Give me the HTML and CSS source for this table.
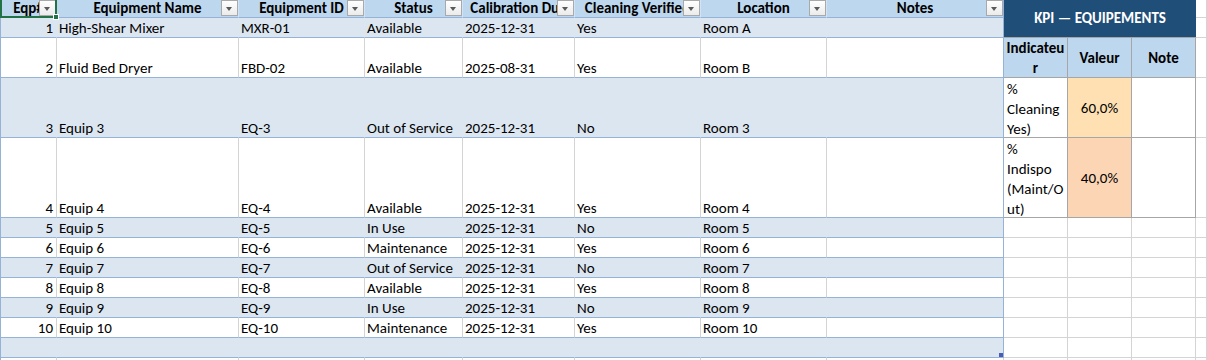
FILE: index.html
```html
<!DOCTYPE html>
<html>
<head>
<meta charset="utf-8">
<title>Equipment</title>
<link rel="stylesheet" href="styles.css">
</head>
<body>
<div class="sheet">
  <div class="tbl">
    <div class="row hdr">
      <div class="c th">Eqp#<span class="flt"></span></div>
      <div class="c th">Equipment Name<span class="flt"></span></div>
      <div class="c th">Equipment ID<span class="flt"></span></div>
      <div class="c th">Status<span class="flt"></span></div>
      <div class="c th">Calibration Due<span class="flt"></span></div>
      <div class="c th">Cleaning Verified<span class="flt"></span></div>
      <div class="c th">Location<span class="flt"></span></div>
      <div class="c th last">Notes<span class="flt"></span></div>
    </div>
    <div class="row band h20">
      <div class="c num">1</div><div class="c">High-Shear Mixer</div><div class="c">MXR-01</div><div class="c">Available</div><div class="c">2025-12-31</div><div class="c">Yes</div><div class="c">Room A</div><div class="c last"></div>
    </div>
    <div class="row plain h40">
      <div class="c num">2</div><div class="c">Fluid Bed Dryer</div><div class="c">FBD-02</div><div class="c">Available</div><div class="c">2025-08-31</div><div class="c">Yes</div><div class="c">Room B</div><div class="c last"></div>
    </div>
    <div class="row band h60">
      <div class="c num">3</div><div class="c">Equip 3</div><div class="c">EQ-3</div><div class="c">Out of Service</div><div class="c">2025-12-31</div><div class="c">No</div><div class="c">Room 3</div><div class="c last"></div>
    </div>
    <div class="row plain h80">
      <div class="c num">4</div><div class="c">Equip 4</div><div class="c">EQ-4</div><div class="c">Available</div><div class="c">2025-12-31</div><div class="c">Yes</div><div class="c">Room 4</div><div class="c last"></div>
    </div>
    <div class="row band h20">
      <div class="c num">5</div><div class="c">Equip 5</div><div class="c">EQ-5</div><div class="c">In Use</div><div class="c">2025-12-31</div><div class="c">No</div><div class="c">Room 5</div><div class="c last"></div>
    </div>
    <div class="row plain h20">
      <div class="c num">6</div><div class="c">Equip 6</div><div class="c">EQ-6</div><div class="c">Maintenance</div><div class="c">2025-12-31</div><div class="c">Yes</div><div class="c">Room 6</div><div class="c last"></div>
    </div>
    <div class="row band h20">
      <div class="c num">7</div><div class="c">Equip 7</div><div class="c">EQ-7</div><div class="c">Out of Service</div><div class="c">2025-12-31</div><div class="c">No</div><div class="c">Room 7</div><div class="c last"></div>
    </div>
    <div class="row plain h20">
      <div class="c num">8</div><div class="c">Equip 8</div><div class="c">EQ-8</div><div class="c">Available</div><div class="c">2025-12-31</div><div class="c">Yes</div><div class="c">Room 8</div><div class="c last"></div>
    </div>
    <div class="row band h20">
      <div class="c num">9</div><div class="c">Equip 9</div><div class="c">EQ-9</div><div class="c">In Use</div><div class="c">2025-12-31</div><div class="c">No</div><div class="c">Room 9</div><div class="c last"></div>
    </div>
    <div class="row plain h20">
      <div class="c num">10</div><div class="c">Equip 10</div><div class="c">EQ-10</div><div class="c">Maintenance</div><div class="c">2025-12-31</div><div class="c">Yes</div><div class="c">Room 10</div><div class="c last"></div>
    </div>
    <div class="row band h20 total">
      <div class="c"></div><div class="c"></div><div class="c"></div><div class="c"></div><div class="c"></div><div class="c"></div><div class="c"></div><div class="c last"><span class="resize"></span></div>
    </div>
    <div class="row below h20">
      <div class="c"></div><div class="c"></div><div class="c"></div><div class="c"></div><div class="c"></div><div class="c"></div><div class="c"></div><div class="c"></div>
    </div>
  </div>

  <div class="kpi">
    <div class="kt">KPI — EQUIPEMENTS</div>
    <div class="g"></div>
    <div class="g"></div>

    <div class="kc kh">Indicateu<br>r</div>
    <div class="kc kh">Valeur</div>
    <div class="kc kh">Note</div>
    <div class="g"></div>

    <div class="kc kl">%<br>Cleaning<br>Yes)</div>
    <div class="kc kv v1">60,0%</div>
    <div class="kc kn"></div>
    <div class="g"></div>

    <div class="kc kl">%<br>Indispo<br>(Maint/O<br>ut)</div>
    <div class="kc kv v2">40,0%</div>
    <div class="kc kn"></div>
    <div class="g"></div>

    <div class="g"></div><div class="g"></div><div class="g"></div><div class="g"></div>
    <div class="g"></div><div class="g"></div><div class="g"></div><div class="g"></div>
    <div class="g"></div><div class="g"></div><div class="g"></div><div class="g"></div>
    <div class="g"></div><div class="g"></div><div class="g"></div><div class="g"></div>
    <div class="g"></div><div class="g"></div><div class="g"></div><div class="g"></div>
    <div class="g"></div><div class="g"></div><div class="g"></div><div class="g"></div>
    <div class="g"></div><div class="g"></div><div class="g"></div><div class="g"></div>
    <div class="g"></div><div class="g"></div><div class="g"></div><div class="g"></div>
  </div>

  <div class="sel"><span class="handle"></span></div>
</div>
</body>
</html>
```

FILE: styles.css
```css
* { box-sizing: border-box; }

html, body {
  margin: 0;
  padding: 0;
  background: #ffffff;
  overflow: hidden;
}

body {
  font-family: Calibri, Carlito, Lato, "Liberation Sans", sans-serif;
  font-size: 15px;
  color: #000000;
}

.sheet {
  position: relative;
  display: flex;
  align-items: flex-start;
  width: 1207px;
  height: 360px;
  overflow: hidden;
}

/* ---------- main table ---------- */
.tbl {
  display: flex;
  flex-direction: column;
  border-left: 1px solid #95b3d7;
  flex: none;
}

.row {
  display: grid;
  grid-template-columns: 56px 182px 126px 98px 112px 126px 126px 177px;
  height: 20px;
}
.row.hdr { height: 18px; }
.row.h20 { height: 20px; }
.row.h40 { height: 40px; }
.row.h60 { height: 60px; }
.row.h80 { height: 80px; }

.c {
  display: flex;
  align-items: flex-end;
  padding: 0 2px 0 2px;
  line-height: 18px;
  white-space: nowrap;
  overflow: hidden;
  border-bottom: 1px solid #95b3d7;
  border-right: 1px solid #d4d4d4;
}

.c.num { justify-content: flex-end; padding-right: 3px; }

.hdr .c {
  background: #bdd7ee;
  border-right-color: #d3e3f3;
}
.th {
  position: relative;
  justify-content: center;
  font-weight: 700;
}

.flt {
  position: absolute;
  right: 0;
  top: 0;
  width: 17px;
  height: 16px;
  border: 1px solid #a9a9a9;
  background: linear-gradient(#ffffff, #ebebeb);
}
.flt::after {
  content: "";
  position: absolute;
  left: 4px;
  top: 6px;
  border-left: 3.5px solid transparent;
  border-right: 3.5px solid transparent;
  border-top: 4px solid #5a5a5a;
}

.band .c {
  background: #dce6f1;
  border-right-color: #dce6f1;
}
.plain .c { background: #ffffff; }

.c.last { border-right-color: #95b3d7; }

.below .c {
  border-bottom-color: #d4d4d4;
  border-right-color: #d4d4d4;
}

.total .c.last { position: relative; }
.resize {
  position: absolute;
  right: 0;
  bottom: 0;
  width: 4px;
  height: 4px;
  background: #4a5cb5;
}

/* ---------- KPI block ---------- */
.kpi {
  flex: 1;
  display: grid;
  grid-template-columns: 64px 64px 64px 1fr;
  grid-template-rows: 18px 20px 40px 60px 80px repeat(8, 20px);
}

.kt {
  grid-column: 1 / 4;
  grid-row: 1 / 3;
  background: #1f4e78;
  color: #ffffff;
  font-weight: 700;
  display: flex;
  align-items: center;
  justify-content: center;
  white-space: nowrap;
  border-bottom: 1px solid #a6a6a6;
  padding-bottom: 1px;
}

.g {
  border-right: 1px solid #d4d4d4;
  border-bottom: 1px solid #d4d4d4;
}

.kc {
  border-right: 1px solid #a6a6a6;
  border-bottom: 1px solid #a6a6a6;
  line-height: 20px;
  overflow: hidden;
}

.kh {
  background: #bdd7ee;
  font-weight: 700;
  display: flex;
  align-items: center;
  justify-content: center;
  text-align: center;
  white-space: nowrap;
}

.kl {
  background: #ffffff;
  padding-left: 3px;
  padding-top: 1px;
  white-space: nowrap;
}

.kv {
  display: flex;
  align-items: center;
  justify-content: center;
}
.v1 { background: #fee0b2; }
.v2 { background: #fcd5b4; }

.kn { background: #ffffff; }

/* ---------- active cell selection ---------- */
.sel {
  position: absolute;
  left: 0;
  top: -2px;
  width: 57px;
  height: 20px;
  border: 2px solid #217346;
  pointer-events: none;
}
.handle {
  position: absolute;
  right: -4px;
  bottom: -4px;
  width: 6px;
  height: 6px;
  background: #217346;
  border: 1px solid #ffffff;
}
```
